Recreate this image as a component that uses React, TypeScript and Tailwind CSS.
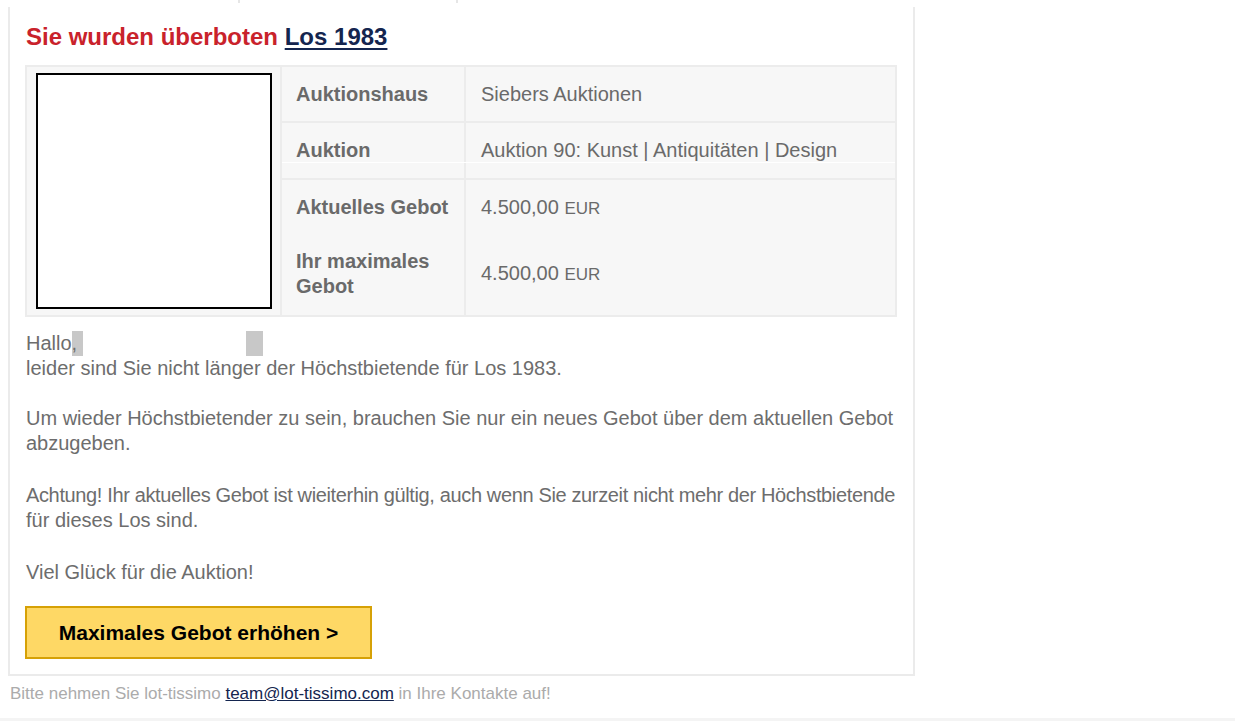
export default function App() {
  const font = { fontFamily: '"Liberation Sans", Arial, sans-serif' };

  return (
    <div className="min-h-screen bg-white" style={font}>
      {/* remnants of the header table above */}
      <div className="flex h-[3px]">
        <div className="ml-[238px] w-[2px] bg-[#e6e6e6]" />
        <div className="ml-[216px] w-[2px] bg-[#e6e6e6]" />
      </div>

      <div className="ml-[8px] mt-[4px] w-[907px] border-x-2 border-b-2 border-[#ebebeb] pl-[15px] pr-[16px] pt-[16px] pb-[15px]">
        {/* Heading */}
        <h1 className="pl-px text-[24px] leading-[28px] font-bold text-[#c9222b]">
          Sie wurden überboten{" "}
          <a href="#" className="text-[#14254f] underline decoration-2 underline-offset-[3px]">
            Los 1983
          </a>
        </h1>

        {/* Lot table */}
        <div className="mt-[14px] flex border-2 border-[#ececec] bg-[#f7f7f7] text-[20px] text-[#6a6a6a]">
          <div className="w-[255px] border-r-2 border-[#ececec] pl-[9px] pt-[6px]">
            <div className="h-[236px] w-[236px] border-2 border-black bg-white" />
          </div>

          <div className="flex flex-1 flex-col">
            <div className="flex border-b-2 border-[#ececec]">
              <div className="w-[184px] border-r-2 border-[#ececec] px-[14px] py-[14px] leading-[26px] font-bold">
                Auktionshaus
              </div>
              <div className="flex-1 px-[15px] py-[14px] leading-[26px]">Siebers Auktionen</div>
            </div>

            <div className="relative flex border-b-2 border-[#ececec]">
              <div className="w-[184px] border-r-2 border-[#ececec] px-[14px] py-[14px] leading-[27px] font-bold">
                Auktion
              </div>
              <div className="flex-1 px-[15px] py-[14px] leading-[27px]">
                Auktion 90: Kunst | Antiquitäten | Design
              </div>
              <div className="absolute left-0 right-0 top-[39px] h-px bg-white" />
            </div>

            <div className="flex">
              <div className="w-[184px] border-r-2 border-[#ececec] px-[14px] py-[14px] leading-[26px] font-bold">
                Aktuelles Gebot
              </div>
              <div className="flex-1 px-[15px] py-[14px] leading-[26px]">
                4.500,00 <span className="text-[17px]">EUR</span>
              </div>
            </div>
            <div className="flex">
              <div className="w-[184px] border-r-2 border-[#ececec] px-[14px] pt-[13px] pb-[16px] leading-[25px] font-bold">
                Ihr maximales
                <br />
                Gebot
              </div>
              <div className="flex flex-1 items-center px-[15px] pb-[3px] leading-[25px]">
                <span>
                  4.500,00 <span className="text-[17px]">EUR</span>
                </span>
              </div>
            </div>
          </div>
        </div>

        {/* Body text */}
        <div className="-mr-[8px] mt-[14px] pl-px text-[20px] leading-[25px] text-[#6d6d6d]">
          <p>
            Hallo
            <span className="inline-block h-[25px] w-[11px] bg-[#c8c8c8] align-top">,</span>
            <span className="inline-block h-[25px] w-[163px] align-top" />
            <span className="inline-block h-[25px] w-[17px] bg-[#c8c8c8] align-top" />
            <br />
            leider sind Sie nicht länger der Höchstbietende für Los 1983.
          </p>
          <p className="mt-[25px]">
            Um wieder Höchstbietender zu sein, brauchen Sie nur ein neues Gebot über dem aktuellen Gebot abzugeben.
          </p>
          <p className="mt-[27px]">
            <span className="whitespace-nowrap tracking-[-0.36px]">
              Achtung! Ihr aktuelles Gebot ist wieiterhin gültig, auch wenn Sie zurzeit nicht mehr der Höchstbietende
            </span>
            <br />
            für dieses Los sind.
          </p>
          <p className="mt-[27px]">Viel Glück für die Auktion!</p>
        </div>

        {/* Button */}
        <button
          type="button"
          className="mt-[21px] flex h-[53px] w-[347px] items-center justify-center border-2 border-[#d6a106] bg-[#fed865] text-[21px] font-bold text-black"
        >
          Maximales Gebot erhöhen &gt;
        </button>
      </div>

      {/* Footer */}
      <p className="ml-[10px] mt-[8px] text-[17px] leading-[20px] text-[#ababab]">
        Bitte nehmen Sie lot-tissimo{" "}
        <a href="#" className="text-[#14254f] underline">
          team@lot-tissimo.com
        </a>{" "}
        in Ihre Kontakte auf!
      </p>
      <div className="mt-[14px] h-[10px] bg-[#f4f4f4]" />
    </div>
  );
}
